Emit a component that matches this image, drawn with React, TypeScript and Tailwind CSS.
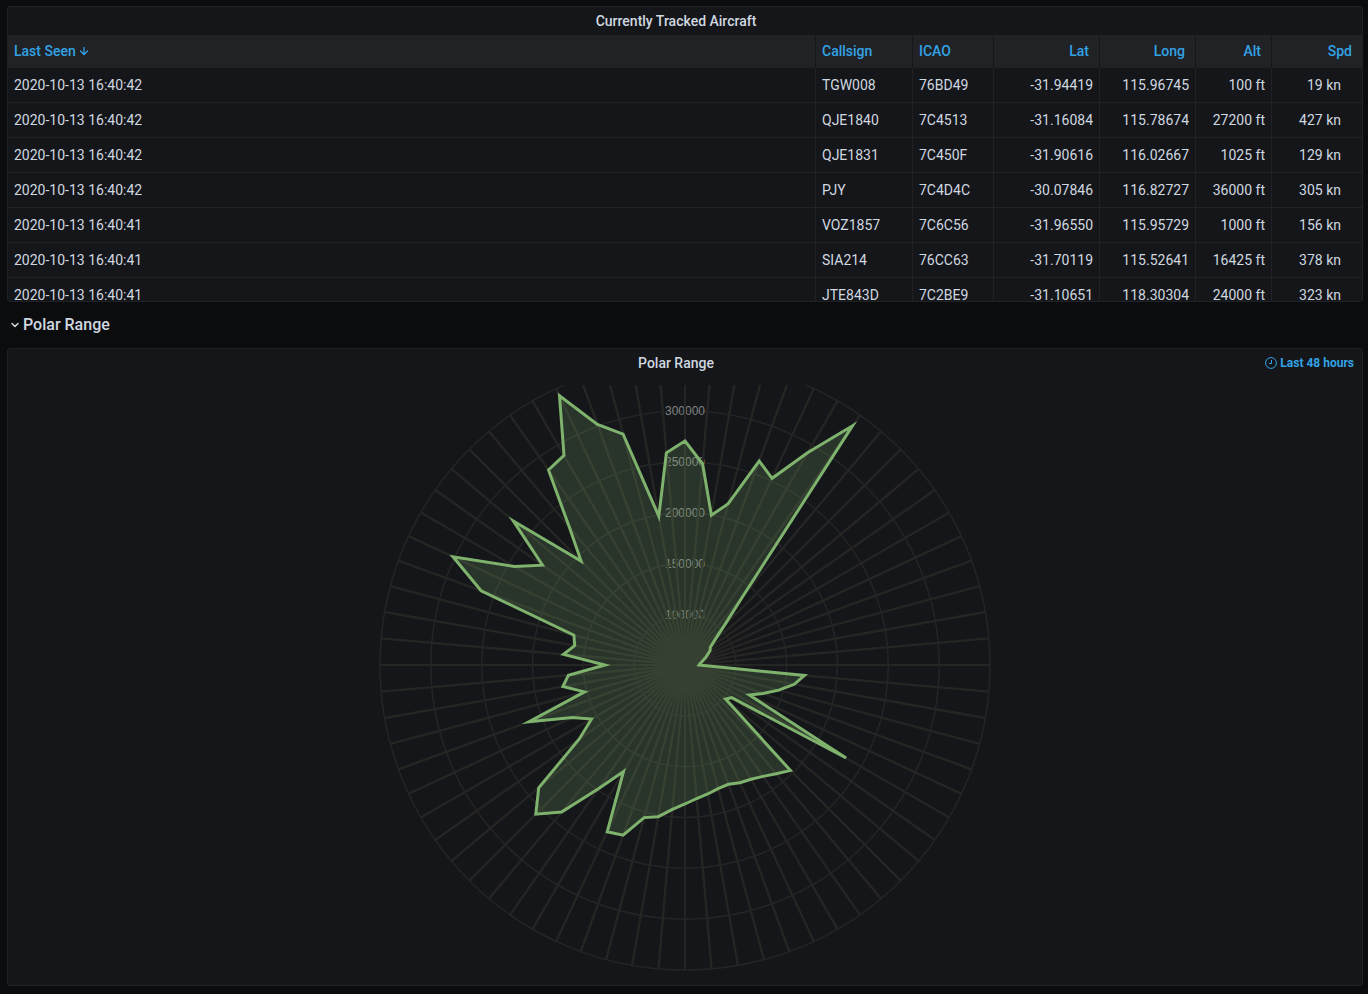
import { ArrowDown, ChevronDown } from "lucide-react";

const aircraft = [
  { seen: "2020-10-13 16:40:42", callsign: "TGW008", icao: "76BD49", lat: "-31.94419", long: "115.96745", alt: "100 ft", spd: "19 kn" },
  { seen: "2020-10-13 16:40:42", callsign: "QJE1840", icao: "7C4513", lat: "-31.16084", long: "115.78674", alt: "27200 ft", spd: "427 kn" },
  { seen: "2020-10-13 16:40:42", callsign: "QJE1831", icao: "7C450F", lat: "-31.90616", long: "116.02667", alt: "1025 ft", spd: "129 kn" },
  { seen: "2020-10-13 16:40:42", callsign: "PJY", icao: "7C4D4C", lat: "-30.07846", long: "116.82727", alt: "36000 ft", spd: "305 kn" },
  { seen: "2020-10-13 16:40:41", callsign: "VOZ1857", icao: "7C6C56", lat: "-31.96550", long: "115.95729", alt: "1000 ft", spd: "156 kn" },
  { seen: "2020-10-13 16:40:41", callsign: "SIA214", icao: "76CC63", lat: "-31.70119", long: "115.52641", alt: "16425 ft", spd: "378 kn" },
  { seen: "2020-10-13 16:40:41", callsign: "JTE843D", icao: "7C2BE9", lat: "-31.10651", long: "118.30304", alt: "24000 ft", spd: "323 kn" },
];

const columns = [
  { label: "Callsign", align: "text-left" },
  { label: "ICAO", align: "text-left" },
  { label: "Lat", align: "text-right" },
  { label: "Long", align: "text-right" },
  { label: "Alt", align: "text-right" },
  { label: "Spd", align: "text-right" },
];

const OUTER_RADIUS = 305;
const RING_COUNT = 6;
const STEP = 5;

// Plotted radius for every 5 degrees of bearing, clockwise from north
const radii = [
  224, 202, 152, 167, 217, 206, 245, 292, 91, 55, 39, 31,
  29, 25, 22, 19, 17, 15, 14, 120, 111, 97, 83, 71,
  186, 57, 53, 149, 142, 136, 132, 130, 127, 128, 131, 134,
  139, 145, 154, 158, 181, 184, 123, 151, 192, 211, 191, 129,
  108, 124, 166, 104, 124, 117, 80, 122, 112, 115, 217, 256,
  197, 174, 224, 147, 180, 238, 242, 297, 256, 239, 151, 213,
];

const polar = (bearing: number, radius: number) => {
  const rad = (bearing * Math.PI) / 180;
  return [radius * Math.sin(rad), -radius * Math.cos(rad)];
};

const spokes = radii.map((_, i) => polar(i * STEP, OUTER_RADIUS));
const rings = Array.from({ length: RING_COUNT }, (_, i) => ((i + 1) * OUTER_RADIUS) / RING_COUNT);
const outline = radii.map((r, i) => polar(i * STEP, r).map((n) => n.toFixed(1)).join(",")).join(" ");

const PolarChart = () => (
  <svg viewBox="-305 -280 610 600" className="block h-[600px] w-full" role="img" aria-label="Polar Range">
    <g stroke="#242525" strokeWidth="1.5" fill="none">
      {rings.map((r) => (
        <circle key={r} r={r} />
      ))}
    </g>
    <g fill="#808182" fontFamily="Liberation Sans, Arial, sans-serif" fontSize="12" textAnchor="middle">
      {rings.slice(0, 5).map((r, i) => (
        <text key={r} x="0" y={Math.ceil(4 - r)}>
          {100000 + i * 50000}
        </text>
      ))}
    </g>
    <g stroke="#252524">
      {spokes.map(([x, y], i) => (
        <line key={i} x1="0" y1="0" x2={x} y2={y} strokeWidth={i % 18 === 0 ? 2 : 2.4} />
      ))}
    </g>
    <polygon points={outline} fill="#7eb26d" fillOpacity="0.2" stroke="#7eb26d" strokeWidth="3" strokeMiterlimit="8" />
  </svg>
);

const ClockIcon = () => (
  <svg viewBox="0 0 12 12" className="size-3" fill="none" stroke="currentColor" aria-hidden="true">
    <circle cx="6" cy="6" r="5.4" strokeWidth="1" />
    <path d="M6.5 3v3.5H4" strokeWidth="1" />
  </svg>
);

const AircraftTable = () => (
  <table className="w-full table-fixed border-separate border-spacing-0 text-sm leading-5">
    <colgroup>
      <col />
      <col className="w-[97px]" />
      <col className="w-[81px]" />
      <col className="w-[106px]" />
      <col className="w-24" />
      <col className="w-[76px]" />
      <col className="w-[90px]" />
    </colgroup>
    <thead className="bg-[#202226] text-[#33a2e5]">
      <tr className="h-[33px]">
        <th className="border-r border-[#141619] px-1.5 pb-0.5 text-left font-medium">
          <button type="button" className="flex items-center gap-0.5">
            Last Seen
            <ArrowDown className="size-3" strokeWidth={2.5} />
          </button>
        </th>
        {columns.map((column) => (
          <th
            key={column.label}
            className={`${column.align} border-r border-[#141619] pr-2.5 pb-0.5 pl-1.5 font-medium last:border-r-0`}
          >
            <button type="button">{column.label}</button>
          </th>
        ))}
      </tr>
    </thead>
    <tbody className="[&_td]:border-r [&_td]:border-b [&_td]:border-[#202226] [&_td]:px-1.5 [&_td:last-child]:border-r-0 [&_td:last-child]:pr-[21px]">
      {aircraft.map((row) => (
        <tr key={row.callsign} className="h-[35px]">
          <td>{row.seen}</td>
          <td>{row.callsign}</td>
          <td>{row.icao}</td>
          <td className="text-right">{row.lat}</td>
          <td className="text-right">{row.long}</td>
          <td className="text-right">{row.alt}</td>
          <td className="text-right">{row.spd}</td>
        </tr>
      ))}
    </tbody>
  </table>
);

export default function App() {
  return (
    <main className="min-h-screen bg-[#0b0c0e] pt-1.5 pr-[5px] pb-2 pl-[7px] font-['Roboto',sans-serif] text-[#d0d8e0]">
      <section className="h-[296px] overflow-hidden rounded-[3px] border border-[#202226] bg-[#141619]">
        <h2 className="flex h-7 items-center justify-center pr-[18px] text-sm font-medium">Currently Tracked Aircraft</h2>
        <AircraftTable />
      </section>

      <button type="button" className="flex h-[46px] items-center gap-0.5 pl-0.5 text-base font-medium">
        <ChevronDown className="size-3" strokeWidth={3} />
        Polar Range
      </button>

      <section className="rounded-[3px] border border-[#202226] bg-[#141619]">
        <header className="grid h-9 grid-cols-[1fr_auto_1fr] items-start pt-1">
          <h2 className="col-start-2 pr-[18px] text-sm font-medium">Polar Range</h2>
          <span className="flex h-5 items-center gap-[3px] justify-self-end pr-2 text-xs font-bold text-[#33a2e5]">
            <ClockIcon />
            Last 48 hours
          </span>
        </header>
        <PolarChart />
      </section>
    </main>
  );
}
